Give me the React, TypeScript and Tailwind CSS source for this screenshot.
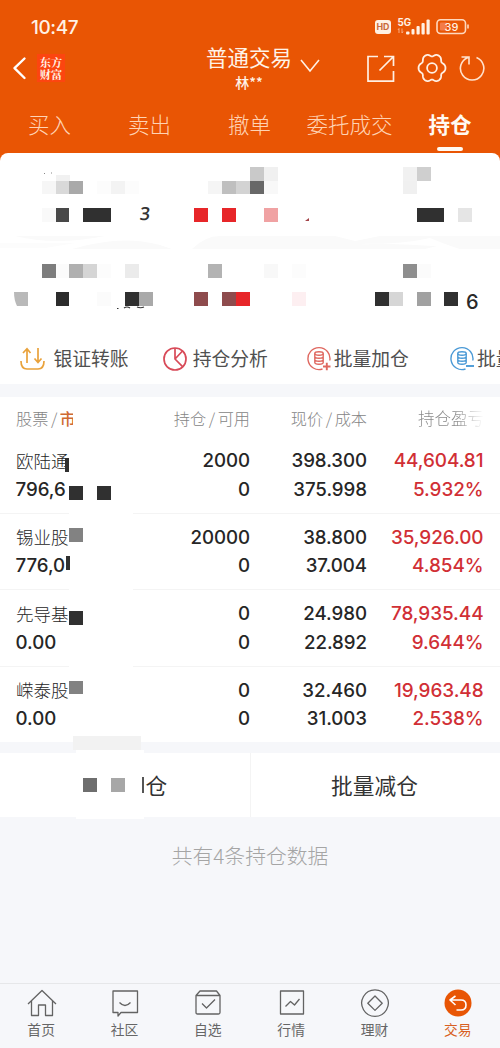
import React from "react";

const CELL = 500 / 36;

// [column, row, colour] of every privacy tile on a 36-column grid
const tiles: [number, number, string][] = [
  [18, 12, "#c9c9c9"], [19, 12, "#f0f0f0"], [29, 12, "#f1f1f1"], [30, 12, "#cfcfcf"],
  [3, 13, "#f6f6f6"], [4, 13, "#d9d9d9"], [5, 13, "#a9a9a9"], [7, 13, "#fcfcfc"], [8, 13, "#f3f3f3"], [9, 13, "#fcfcfc"],
  [15, 13, "#f5f5f5"], [16, 13, "#bfbfbf"], [17, 13, "#d3d3d3"], [18, 13, "#686868"], [19, 13, "#f8f8f8"], [29, 13, "#f0f0f0"],
  [3, 15, "#f9f9f9"], [4, 15, "#484848"], [6, 15, "#303030"], [7, 15, "#303030"], [14, 15, "#e72629"], [16, 15, "#e72629"],
  [19, 15, "#f0a2a3"], [30, 15, "#303030"], [31, 15, "#303030"], [33, 15, "#e5e5e5"],
  [3, 19, "#7d7d7d"], [4, 19, "#fbfbfb"], [5, 19, "#b0b0b0"], [6, 19, "#d5d5d5"], [7, 19, "#fcfcfc"], [9, 19, "#ebebeb"],
  [15, 19, "#b3b3b3"], [19, 19, "#f8f8f8"], [21, 19, "#fcfcfc"], [29, 19, "#8e8e8e"], [30, 19, "#fbfbfb"],
  [4, 21, "#2c2c2c"], [7, 21, "#fbfbfb"], [9, 21, "#303030"], [10, 21, "#a9a9a9"], [14, 21, "#8e4b4d"],
  [16, 21, "#8e4b4d"], [17, 21, "#e72629"], [21, 21, "#fdeff1"], [27, 21, "#303030"], [28, 21, "#d6d6d6"],
  [30, 21, "#a1a1a1"], [32, 21, "#303030"],
  [5, 35, "#303030"], [7, 35, "#303030"], [5, 38, "#828282"], [5, 44, "#303030"], [5, 49, "#828282"],
  [6, 56, "#6e6e6e"], [8, 56, "#a7a7a7"],
];

function Tiles() {
  return (
    <>
      {tiles.map(([c, r, color]) => {
        const left = Math.round(c * CELL);
        const top = Math.round(r * CELL);
        return (
          <span
            key={`${c}-${r}`}
            className="absolute"
            style={{
              left,
              top,
              width: Math.round((c + 1) * CELL) - left,
              height: Math.round((r + 1) * CELL) - top,
              background: color,
            }}
          />
        );
      })}
    </>
  );
}

// Outline of a soft six-lobed cog centred on (15, 15)
const cogPath =
  "M" +
  Array.from({ length: 120 }, (_, i) => {
    const a = (i * Math.PI) / 60;
    const r = 12.4 + 1.25 * Math.cos(6 * a) - 0.2 * Math.cos(12 * a);
    return `${(15 + r * Math.cos(a)).toFixed(2)} ${(15 + 1.06 * r * Math.sin(a)).toFixed(2)}`;
  }).join("L") +
  "Z";

function StatusBar() {
  return (
    <div className="flex h-[45px] items-start justify-between px-[31px] pt-[13px]">
      <span className="mt-px font-['Inter'] text-[19px] font-medium leading-[28px] tracking-[-0.4px] text-[#fff1e4]">10:47</span>
      <svg width="94" height="18" viewBox="0 0 94 18" className="mt-[4px]" fill="none">
        <rect x="0" y="3" width="16" height="14" rx="3" fill="#fff1e4" />
        <text x="8" y="13.2" textAnchor="middle" fontFamily="Inter" fontSize="8.8" fontWeight="700" fill="#c9683a">HD</text>
        <text x="22.5" y="8.8" fontFamily="Inter" fontSize="9.8" fontWeight="700" fill="#fff1e4">5G</text>
        <path d="M24 16v-4.500M23 13l1-1.500M27 11.500v4.500M28 14.500l-1 1.500" stroke="#f9b48c" strokeWidth="0.9" />
        <g fill="#fff1e4">
          <rect x="31" y="14.5" width="3.5" height="3" rx="1" />
          <rect x="36.5" y="12" width="3" height="5.5" rx="1" />
          <rect x="41.5" y="9" width="3.2" height="8.500" rx="1" />
          <rect x="46.5" y="6" width="3.2" height="11.500" rx="1" />
          <rect x="51.5" y="2.5" width="3.2" height="15" rx="1" />
        </g>
        <rect x="62" y="2.7" width="28.5" height="13.8" rx="3.5" stroke="#ffd9bf" strokeWidth="1.6" />
        <rect x="65" y="5.5" width="7" height="8" rx="1" fill="#f47c48" />
        <path d="M93 7.500v4" stroke="#ffd9bf" strokeWidth="1.6" />
        <text x="76.5" y="13.6" textAnchor="middle" fontFamily="Inter" fontSize="11" fontWeight="500" fill="#fff1e4">39</text>
      </svg>
    </div>
  );
}

function TitleRow() {
  return (
    <div className="relative flex h-[55px] items-start">
      <svg width="15" height="24" viewBox="0 0 15 24" className="ml-[12px] mt-[11px]" fill="none" stroke="#fff" strokeWidth="2.4" strokeLinecap="round" strokeLinejoin="round">
        <path d="M12.500 2.500L2.500 12.200l10 9.800" />
      </svg>
      <div className="ml-[10px] mt-[9px] flex h-[28px] w-[28px] items-center justify-center bg-[#fc4510] text-center font-['Noto_Serif_CJK_SC','Noto_Sans_CJK_SC',sans-serif] text-[11.2px] font-bold leading-[12.5px] text-[#fff3e8]">
        <span>东方<br />财富</span>
      </div>
      <div className="absolute left-[205px] top-[-1px] flex w-[88px] flex-col items-center">
        <span className="whitespace-nowrap text-[21.5px] leading-[26px] text-[#fff3e8]">普通交易</span>
        <span className="h-[22px] whitespace-nowrap text-[14px] font-medium leading-[24px] text-[#fff3e8]">林**</span>
      </div>
      <svg width="20" height="14" viewBox="0 0 20 14" className="ml-[235px] mt-[14px] shrink-0" fill="none" stroke="#fff0e4" strokeWidth="1.6">
        <path d="M1 1l9 11 9-11" />
      </svg>
      <svg width="28" height="28" viewBox="0 0 28 28" className="ml-[47px] mt-[10px] shrink-0" fill="none" stroke="#fff0e4" strokeWidth="1.7">
        <path d="M11 1.500H1V26.200H26.500V16M17 1.500h9.500v9.500M26.500 1.500L12.500 15.500" />
      </svg>
      <svg width="30" height="30" viewBox="0 0 30 30" className="ml-[22px] mt-[8px] shrink-0" fill="none" stroke="#fff0e4" strokeWidth="1.8" strokeLinejoin="round">
        <path d={cogPath} />
        <circle cx="15" cy="15" r="4.9" />
      </svg>
      <svg width="26" height="26" viewBox="0 0 26 26" className="ml-[12px] mt-[10px] shrink-0" fill="none" stroke="#ffe2cd" strokeWidth="1.6">
        <path d="M17.500 2.500A11.700 11.700 0 1 1 9 2.400M2.500 2h7.500v7.500" />
      </svg>
    </div>
  );
}

function Tabs() {
  return (
    <div className="grid h-[53px] grid-cols-5 text-[21.5px] leading-[30px] text-[#ffd3b4]">
      {["买入", "卖出", "撤单", "委托成交", "持仓"].map((t) =>
        t === "持仓" ? (
          <div key={t} className="flex flex-col items-center pt-[9px] font-bold text-[#fffaf3]">
            <span>{t}</span>
            <span className="mt-[8px] h-[4px] w-[26px] rounded-full bg-[#fffaf3]" />
          </div>
        ) : (
          <div key={t} className="-ml-px flex justify-center whitespace-nowrap pt-[9px] font-light">{t}</div>
        )
      )}
    </div>
  );
}

function Coins({ color, plus }: { color: string; plus: boolean }) {
  return (
    <svg width="25" height="26" viewBox="0 0 25 26" fill="none" stroke={color} strokeWidth="1.4">
      <path d="M15.500 23A11 11 0 1 1 22.800 14.500" />
      <ellipse cx="12" cy="7.5" rx="4.2" ry="1.7" />
      <path d="M7.800 7.500v9c0 2.300 8.400 2.300 8.400 0v-9M7.800 10.500c0 2.300 8.400 2.300 8.400 0M7.800 13.500c0 2.300 8.400 2.300 8.400 0" />
      {plus ? <path d="M16 20.500h7.500M19.800 16.800v7.500" strokeWidth="1.9" /> : <path d="M16 20h8" strokeWidth="1.9" />}
    </svg>
  );
}

function Actions() {
  return (
    <div className="flex h-[51px] w-[500px] items-center overflow-hidden whitespace-nowrap text-[18.8px] text-[#505050]">
      <svg width="25" height="24" viewBox="0 0 25 24" className="ml-[20px] shrink-0" fill="none" stroke="#e9a23b" strokeWidth="1.7">
        <path d="M1 14c0 5.500 2 8 6 8h11c4 0 6-2.500 6-8M7 16V2.500M3 6l4-4.300L10.500 6M18 1v14M14.500 11.500L18 15.500l3.500-4" />
      </svg>
      <span className="ml-[8.5px]">银证转账</span>
      <svg width="24" height="24" viewBox="0 0 24 24" className="ml-[34.5px] shrink-0" fill="none" stroke="#d84a58" strokeWidth="1.7">
        <circle cx="12" cy="12" r="11" />
        <path d="M12 1v11l7.800 7.800M12 12l7.500-8" />
      </svg>
      <span className="ml-[5.5px]">持仓分析</span>
      <span className="ml-[39px] shrink-0"><Coins color="#df6860" plus /></span>
      <span className="ml-[2px]">批量加仓</span>
      <span className="ml-[41px] shrink-0"><Coins color="#4b9ad6" plus={false} /></span>
      <span className="ml-[2px]">批量减仓</span>
    </div>
  );
}

function Summary() {
  return (
    <section className="flex h-[231px] flex-col rounded-t-[8px] bg-white">
      <div className="relative h-[83px]">
        <span className="absolute left-[140px] top-[48px] -skew-x-6 font-['Open_Sans'] text-[18px] font-semibold leading-[24px] text-[#333]">3</span>
        <svg className="absolute left-[304px] top-[64px]" width="6" height="5" viewBox="0 0 6 5"><path d="M1 4L5 1v3z" fill="#a34348" /></svg>
        <svg className="absolute left-[42px] top-[19px]" width="28" height="10" viewBox="0 0 28 10">
          <path d="M14 3h14v7H14z" fill="#f1f1f1" /><path d="M2 1.500h1M9 1h1" stroke="#888" />
        </svg>
      </div>
      <svg width="500" height="14" viewBox="0 0 500 14" fill="#fafafa">
        <path d="M15 0Q55 10 105 0zM72 13Q130-4 172 13zM192 13Q205 0 220 0h115l20 5 25-5h80l40 0v13h-40l-15-5-20 5z" />
        <path d="M355 8Q400 9 430 2L455 12Q400 7 355 8z" fill="#fff" />
        <path d="M0 7h75l-30 5H0z" fill="#fcfcfc" />
      </svg>
      <div className="relative h-[83px]">
        <span className="absolute left-[466px] top-[40px] font-['Inter'] text-[20px] font-medium leading-[24px] text-[#292929]">6</span>
        <svg className="absolute left-[116px] top-[54px]" width="32" height="7" viewBox="0 0 32 7" fill="none" stroke="#333" strokeWidth="1.2">
          <path d="M1 4.500h1.500M8 4q3-2 6 0M21 3q3.500 1.500 7 0" />
        </svg>
        <svg className="absolute left-[14px] top-[42px]" width="14" height="14" viewBox="0 0 14 14"><path d="M0 0h14v14H3Q0 8 0 0z" fill="#b9b9b9" /></svg>
      </div>
      <Actions />
    </section>
  );
}

const rows = [
  ["欧陆通", "796,6", "2000", "0", "398.300", "375.998", "44,604.81", "5.932%"],
  ["锡业股", "776,0", "20000", "0", "38.800", "37.004", "35,926.00", "4.854%"],
  ["先导基", "0.00", "0", "0", "24.980", "22.892", "78,935.44", "9.644%"],
  ["嵘泰股", "0.00", "0", "0", "32.460", "31.003", "19,963.48", "2.538%"],
];

function Holdings() {
  return (
    <section className="relative h-[345px] bg-white">
      <div className="grid h-[40px] grid-cols-[110px_124px_117px_117px] items-center pl-[16px] pt-[2px] text-[16.2px] font-light text-[#858585]">
        <span className="flex">股票<i className="mx-[2.5px] not-italic">/</i><b className="w-[13px] overflow-hidden font-medium text-[#cf6b32]">市</b></span>
        <span className="text-right">持仓<i className="mx-[2.5px] not-italic">/</i>可用</span>
        <span className="text-right">现价<i className="mx-[2.5px] not-italic">/</i>成本</span>
        <span className="bg-gradient-to-r from-[#858585] from-75% to-[#ffffff] bg-clip-text text-right text-[16.5px] text-transparent">持仓盈亏</span>
      </div>
      {rows.map((r) => (
        <div
          key={r[0]}
          className="grid h-[76.5px] grid-cols-[110px_124px_117px_116.5px] border-b border-[#f4f4f4] pl-[16px] pt-[10px] font-['Inter','Noto_Sans_CJK_SC',sans-serif] text-[18.7px] font-medium leading-[28.5px] tracking-[-0.05px] text-[#262626] last-of-type:border-0"
        >
          <div className="flex flex-col">
            <span className="h-[28.5px] pt-[0.5px] text-[17.5px] font-light">{r[0]}</span>
            <span className="-ml-[0.5px]">{r[1]}</span>
          </div>
          <div className="flex flex-col text-right"><span>{r[2]}</span><span>{r[3]}</span></div>
          <div className="flex flex-col text-right"><span>{r[4]}</span><span>{r[5]}</span></div>
          <div className="flex flex-col text-right text-[18.9px] text-[#d12f35]"><span>{r[6]}</span><span>{r[7]}</span></div>
        </div>
      ))}
      <span className="absolute left-[69px] top-[40px] h-[305px] w-[64px] bg-white" />
      <span className="absolute left-[65px] top-[61px] h-[14px] w-[4px] bg-[#303030]" />
      <span className="absolute left-[66px] top-[159px] h-[14px] w-[3.5px] bg-[#303030]" />
    </section>
  );
}

function BulkButtons() {
  return (
    <section className="relative grid h-[64px] grid-cols-2 bg-white text-[21.7px] text-[#333]">
      <div className="flex items-center pl-[142px]">
        <span className="mr-[2px] h-[16px] w-[1.5px] bg-[#555]" />
        <span>仓</span>
      </div>
      <div className="flex items-center justify-center border-l border-[#f4f4f4] pr-[2px]">批量减仓</div>
      <span className="absolute left-[73px] top-[-17px] h-[14px] w-[68px] bg-[#f2f2f2]" />
      <span className="absolute left-[76px] top-[-3px] h-[5px] w-[68px] bg-white" />
      <span className="absolute left-[76px] top-[62px] h-[4px] w-[68px] bg-white" />
    </section>
  );
}

const navIcons = [
  <path key="h" d="M1 15L15 1.500 29 15M4.500 12v14.500H11.500V16h7v10.500h7V12" />,
  <path key="c" d="M3 2h24.500v21.500H11l-3 3.500v-3.500H3zM9.500 13.500q5.500 6 11 0" />,
  <path key="z" d="M3 6.500L7 2h16.500L27 6.500V23.500q0 1.500-1.500 1.500h-21Q3 25 3 23.500zM3 6.500h24M9 14.500l4.500 4.500L22 10.500" />,
  <path key="x" d="M3.500 2H26.500V25H3.500zM8.500 17.500l5-5 4 3.500 5-6" />,
  <path key="l" d="M15 .8a13.300 13.300 0 1 0 .01 0zM15 7l7.200 7.200L15 21.400 7.800 14.200z" />,
  <g key="t" stroke="#fff" strokeWidth="1.6">
    <circle cx="15" cy="14" r="13.5" fill="#e85504" stroke="none" />
    <path d="M12.500 7L7 11l5.500 5M7.500 11h10.500q5 0 5 5t-5 5H13.500" />
  </g>,
];

function NavBar() {
  return (
    <nav className="grid h-[65px] grid-cols-6 border-t border-[#e6e7e9] text-[13.8px] leading-[18px] text-[#666]">
      {["首页", "社区", "自选", "行情", "理财", "交易"].map((t, i) => (
        <div key={t} className="flex flex-col items-center pt-[5px]">
          <svg width="30" height="29" viewBox="0 0 30 29" fill="none" stroke="#636363" strokeWidth="1.3" strokeLinejoin="round">{navIcons[i]}</svg>
          <span className={i === 5 ? "-ml-px mt-[2px] text-[#d85f22]" : "-ml-px mt-[2px]"}>{t}</span>
        </div>
      ))}
    </nav>
  );
}

export default function App() {
  return (
    <main className="relative flex h-[1048px] w-[500px] flex-col overflow-hidden bg-[#f6f7fa] font-['Noto_Sans_CJK_SC',sans-serif]">
      <div className="bg-[#e95504]">
        <StatusBar />
        <TitleRow />
        <Tabs />
        <Summary />
      </div>
      <div className="h-[13px]" />
      <Holdings />
      <div className="h-[11px]" />
      <BulkButtons />
      <p className="flex-1 pt-[23px] text-center text-[20.8px] font-light leading-[30px] text-[#a5a5a5]">共有4条持仓数据</p>
      <NavBar />
      <Tiles />
    </main>
  );
}
